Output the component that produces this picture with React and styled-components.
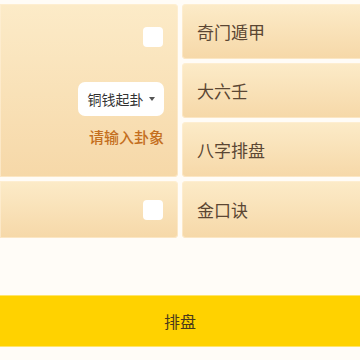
import styled, { createGlobalStyle } from "styled-components";

const GlobalStyle = createGlobalStyle`
    html, body {
        margin: 0;
        padding: 0;
        background: #fffcf7;
        font-family: "Noto Sans CJK SC", "Noto Sans", sans-serif;
    }
`;

const App = () => {
    return (
        <Page>
            <GlobalStyle />
            <Grid>
                <LeftPanel>
                    <Checkbox />
                    <Select>
                        铜钱起卦
                        <Caret />
                    </Select>
                    <Hint>请输入卦象</Hint>
                </LeftPanel>
                <Cell>奇门遁甲</Cell>
                <Cell>大六壬</Cell>
                <Cell>八字排盘</Cell>
                <LeftCell>
                    <Checkbox />
                </LeftCell>
                <Cell>金口诀</Cell>
            </Grid>
            <Spacer />
            <SubmitButton>排盘</SubmitButton>
        </Page>
    );
};

export default App;

const Page = styled.div`
    width: 360px;
    height: 360px;
    overflow: hidden;
    background: #fffcf7;
    padding-top: 4px;
    box-sizing: border-box;
`;

const Grid = styled.div`
    display: grid;
    grid-template-columns: 178px 182px;
    grid-template-rows: 55px 55px 55px 57px;
    column-gap: 4px;
    row-gap: 4px;
    width: 364px;
`;

const cellBg = `
    background: linear-gradient(180deg, #fcebc8 0%, #f6d8a8 100%);
    box-shadow: inset 0 0 0 1px rgba(255, 240, 215, 0.6);
`;

const LeftPanel = styled.div`
    ${cellBg}
    grid-row: 1 / span 3;
    border-radius: 0 4px 4px 0;
    display: flex;
    flex-direction: column;
    align-items: flex-end;
    padding: 23px 15px 0 0;
`;

const LeftCell = styled.div`
    ${cellBg}
    border-radius: 0 4px 4px 0;
    display: flex;
    align-items: center;
    justify-content: flex-end;
    padding-right: 15px;
`;

const Cell = styled.div`
    ${cellBg}
    border-radius: 4px 0 0 4px;
    display: flex;
    align-items: center;
    padding-left: 15px;
    font-size: 17px;
    color: #5b4633;
`;

const Checkbox = styled.div`
    width: 20px;
    height: 20px;
    background: #ffffff;
    border-radius: 4px;
`;

const Select = styled.div`
    margin-top: 35px;
    width: 86px;
    height: 34px;
    box-sizing: border-box;
    background: #ffffff;
    border-radius: 7px;
    display: flex;
    align-items: center;
    justify-content: center;
    gap: 5px;
    font-size: 14px;
    color: #333333;
    margin-right: -1px;
`;

const Caret = styled.span`
    width: 0;
    height: 0;
    border-left: 3.5px solid transparent;
    border-right: 3.5px solid transparent;
    border-top: 4px solid #555555;
`;

const Hint = styled.div`
    margin-top: 10px;
    font-size: 15px;
    font-weight: 500;
    color: #c46f1e;
    margin-right: -1px;
`;

const Spacer = styled.div`
    height: 57px;
`;

const SubmitButton = styled.div`
    height: 52px;
    background: #ffd200;
    border-top: 1px solid #ffe56b;
    border-bottom: 1px solid #ffe56b;
    box-sizing: border-box;
    display: flex;
    align-items: center;
    justify-content: center;
    font-size: 16px;
    color: #4a3a1c;
`;
